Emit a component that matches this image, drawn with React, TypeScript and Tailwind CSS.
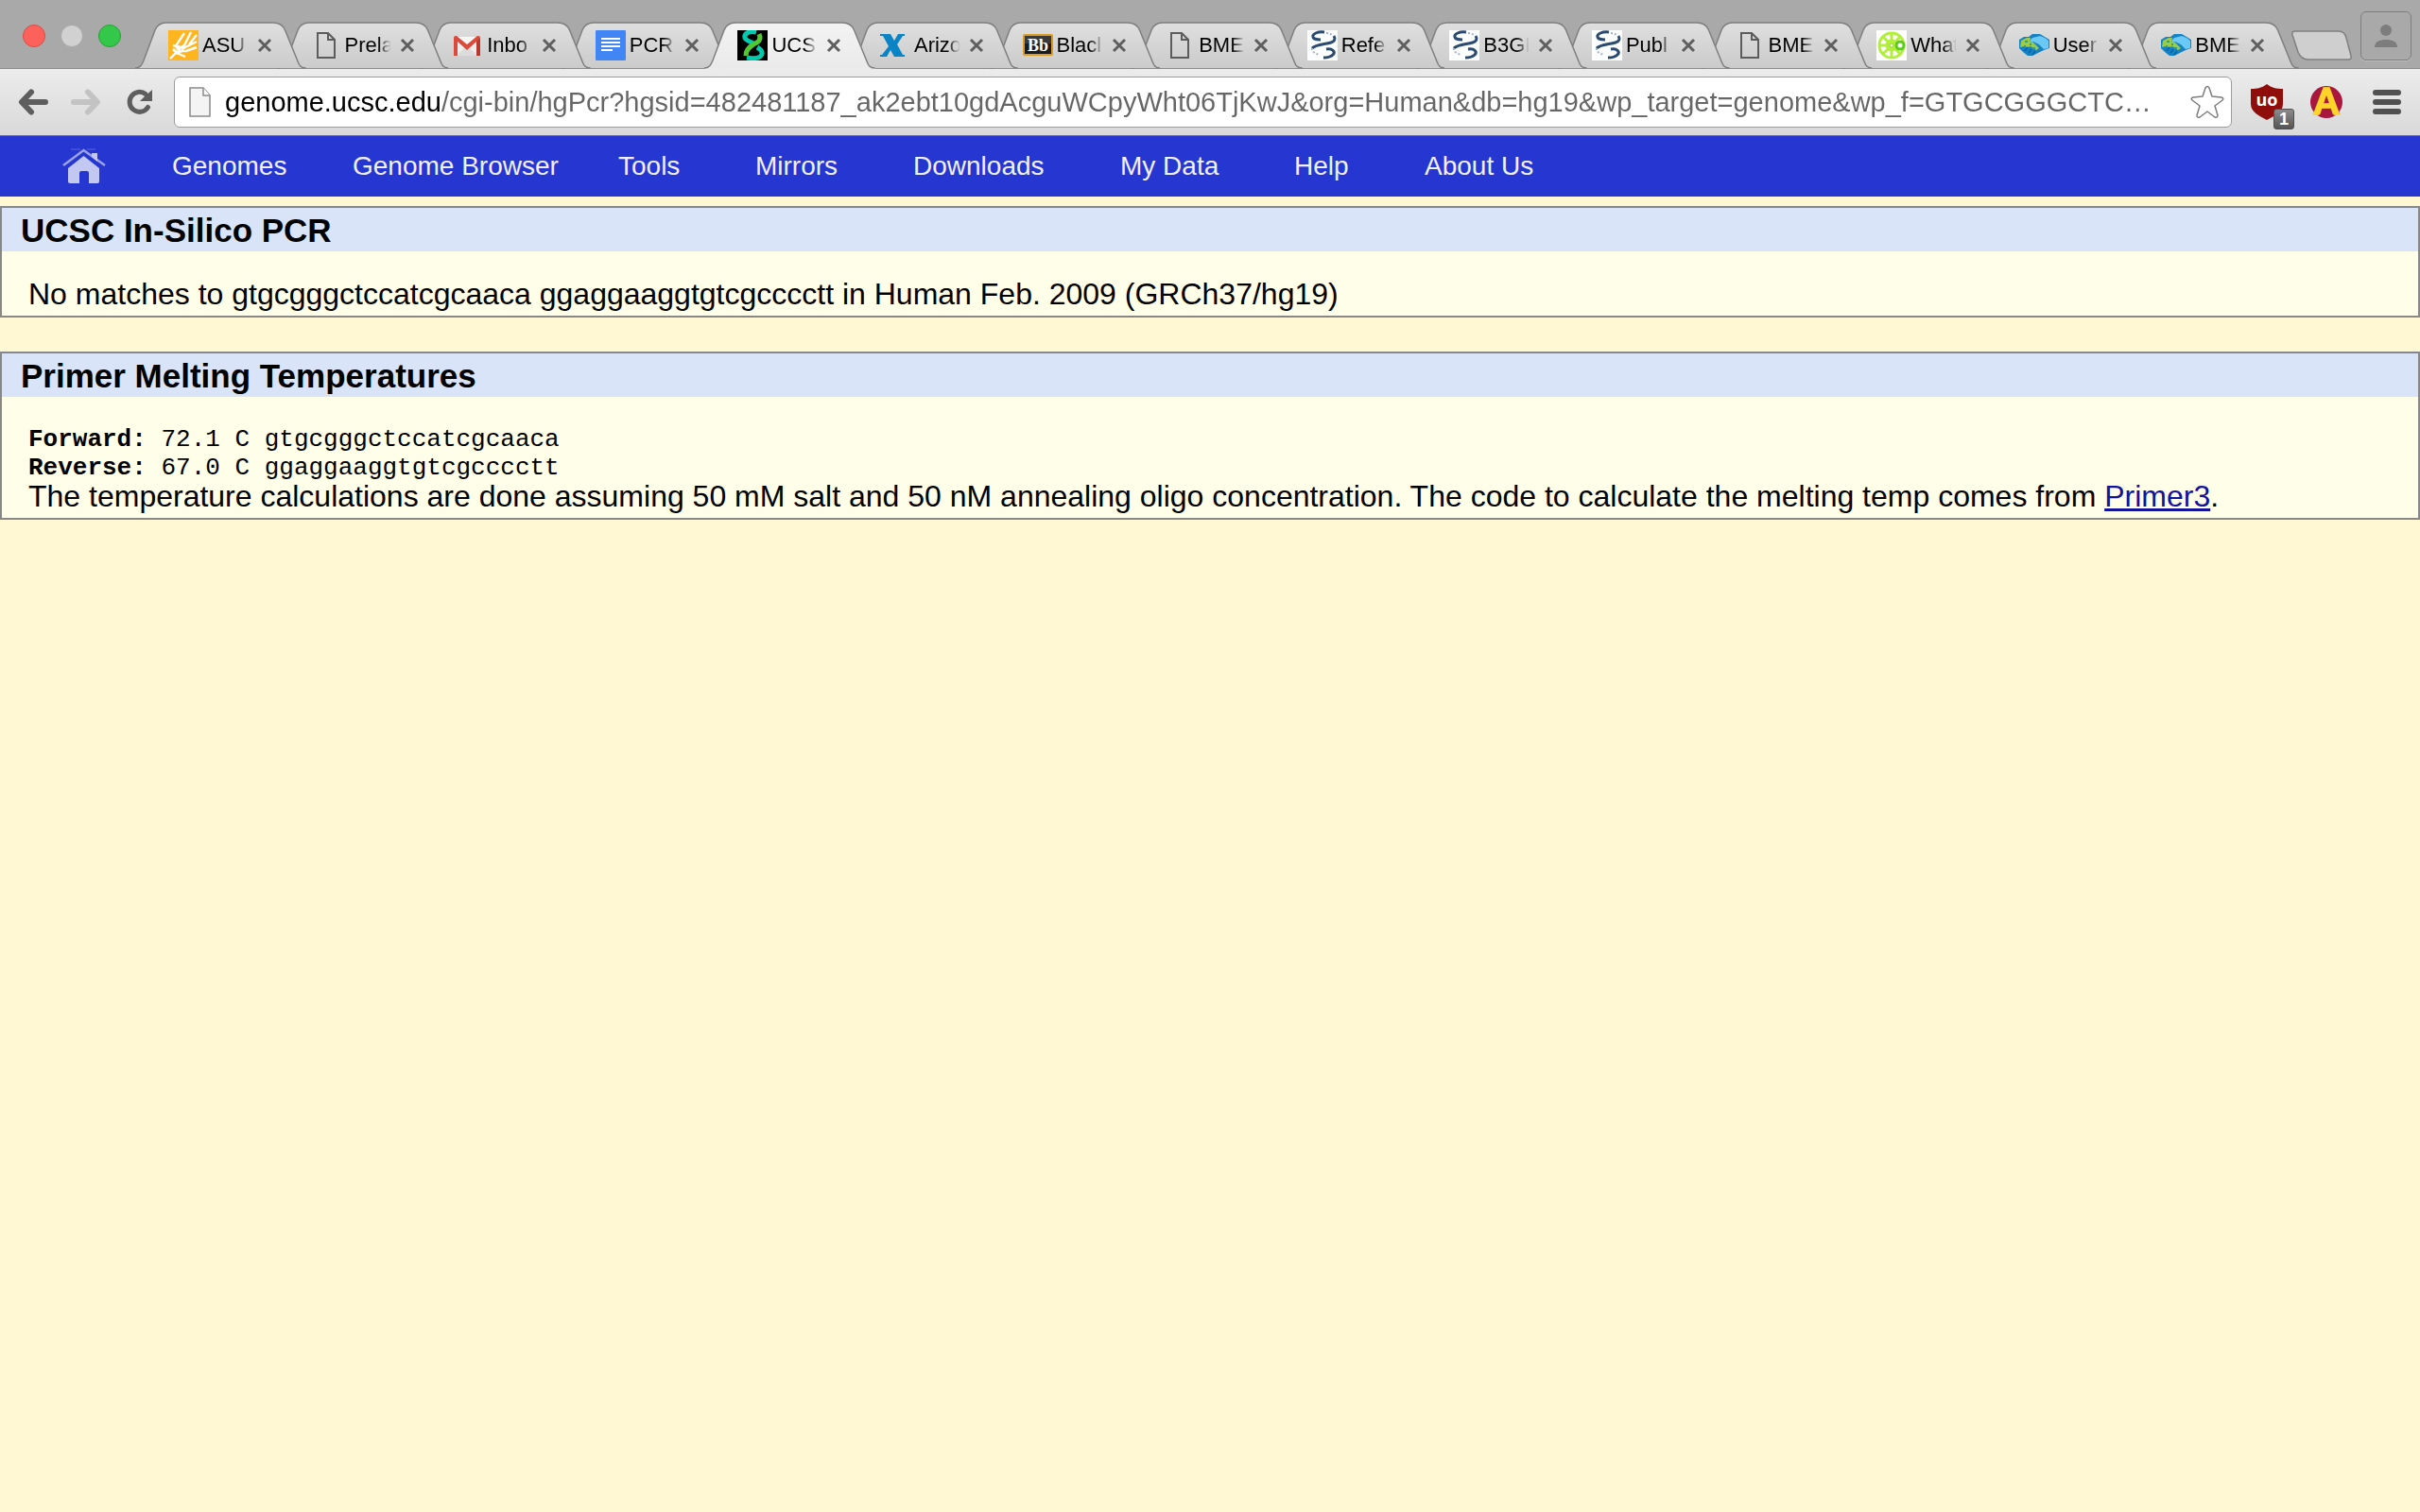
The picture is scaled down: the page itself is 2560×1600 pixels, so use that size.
import type { ReactNode } from 'react';

interface TabInfo {
  title: string;
  icon: ReactNode;
  active?: boolean;
}

interface MenuItem {
  label: string;
  width: string;
}

function PitchforkIcon() {
  return (
    <svg viewBox="0 0 32 32" className="size-8" fill="none" stroke="#fff" strokeWidth="2.4">
      <rect width="32" height="32" fill="#ffb51f" stroke="none" />
      <path d="M2 30 9 23M17 3 9 15q-2 4 3 4l5-3L24 2M13 18l-8-2M22 15l8-10M14 20l4-2 12-6M12 22l7 0 11-4M9 24l9 4" />
      <path d="M9 17 13 24M5 20l6 5" strokeWidth="3" />
    </svg>
  );
}

function PageIcon() {
  return (
    <svg viewBox="0 0 32 32" className="size-8" fill="none" stroke="#5c5c5c" strokeWidth="2">
      <path d="M7 3h11l7 7v19H7z" />
      <path d="M18 3v7h7" />
    </svg>
  );
}

function MailIcon() {
  return (
    <svg viewBox="0 0 32 32" className="size-8">
      <path d="M2 7h26v20H2z" fill="#eee" />
      <path d="M4 27 15 16l11 11z" fill="#dcdcdc" />
      <path d="M4 7h22L15 17z" fill="#f7f7f7" />
      <path d="M1 8q0-2 2-2h1l11 9 11-9h1q2 0 2 2v19h-4V12L15 21 5 12v15H1z" fill="#dc4a3c" />
      <path d="M25 12l4-4v19h-4z" fill="#b9382e" />
    </svg>
  );
}

function DocsIcon() {
  return (
    <svg viewBox="0 0 32 32" className="size-8">
      <rect width="32" height="32" rx="1" fill="#4285f4" />
      <path d="M6 9h20M6 13h20M6 17h20M6 21h12" stroke="#fff" strokeWidth="2" />
    </svg>
  );
}

function HelixIcon() {
  return (
    <svg viewBox="0 0 32 32" className="size-8" fill="none" strokeWidth="5">
      <rect width="32" height="32" fill="#000" />
      <path d="M20 2C12 0 7 4 8 8c1 3 6 4 9 6M21 18c5 3 7 7 3 10-3 2-8 2-14 1" stroke="#00c9ae" />
      <path d="M23 4c3 6-1 9-6 11-5 3-8 6-8 12" stroke="#4fc832" />
    </svg>
  );
}

function CrossIcon() {
  return (
    <svg viewBox="0 0 32 32" className="size-8">
      <path
        d="M0 4h11l4 7 4-7h7v2h-2l-6 9 6 11h2v2H15l-4-7-4 7H0v-2h2l7-9L3 6H0z"
        fill="#0b84c6"
      />
    </svg>
  );
}

function BbIcon() {
  return (
    <svg viewBox="0 0 32 32" className="size-8">
      <rect x="1" y="5" width="30" height="21" rx="1" fill="#1b1b1b" stroke="#d79b26" strokeWidth="2" />
      <rect x="2" y="6" width="28" height="8" fill="#3a3a3a" />
      <text
        x="16"
        y="22"
        textAnchor="middle"
        fontSize="18"
        fontWeight="700"
        fontFamily="Liberation Serif, serif"
        fill="#fff"
      >
        Bb
      </text>
    </svg>
  );
}

function NcbiIcon() {
  return (
    <svg viewBox="0 0 32 32" className="size-8" fill="none" stroke="#2a4a70" strokeWidth="3">
      <rect width="32" height="32" fill="#fcfdfd" stroke="none" />
      <path d="M18 2C11 1 5 4 6 7c0 2 4 3 8 3" />
      <path d="M28 6c2 3 1 6-3 7-7 2-16 2-20 6" />
      <path d="M20 20c7-1 10 3 7 6-2 2-6 3-10 3" />
      <path d="M20 3c3 0 5 1 7 3M5 19c-1 3 3 6 8 7" strokeWidth="2" strokeDasharray="2 2" stroke="#a5b3c8" />
    </svg>
  );
}

function FlowerIcon() {
  return (
    <svg viewBox="0 0 32 32" className="size-8" fill="none" stroke="#b2ee3c" strokeWidth="3">
      <rect width="32" height="32" fill="#fff" stroke="none" />
      <circle cx="16" cy="16" r="13" />
      <circle cx="16" cy="16" r="5" />
      <path d="M16 2v28M2 16h28M6 6l20 20M26 6 6 26" />
      <circle cx="25" cy="16" r="4" stroke="#5bcb1d" fill="#fff" />
      <circle cx="16" cy="16" r="2" fill="#fff" stroke="#8fdc1f" strokeWidth="1" />
    </svg>
  );
}

function HandshakeIcon() {
  return (
    <svg viewBox="0 0 32 32" className="size-8">
      <path d="M0 10 5 7h5l4-3h8l5 3 5 3v9l-6 2-6 3-6 3h-5l-5-4-4-4z" fill="#1482c4" />
      <path d="M18 7l4-1 5 2 4 3v8l-5 1-5-5-6-3-2 1-2-2 3-3z" fill="#6cc9f5" />
      <path d="M2 11l6-3h4l-1 4 4 1 6 6-3 2-6-4-3 1-4-1-4 1z" fill="#9ccb45" />
      <path d="M6 12h3M11 15h2M14 19h3M5 17h2" stroke="#3f9d6c" strokeWidth="2" />
      <path d="M6 22l3-4M10 24l3-4M14 26l3-4" stroke="#0a68ab" strokeWidth="2" />
    </svg>
  );
}

const TABS: TabInfo[] = [
  { title: 'ASU', icon: <PitchforkIcon /> },
  { title: 'Prela', icon: <PageIcon /> },
  { title: 'Inbo', icon: <MailIcon /> },
  { title: 'PCR', icon: <DocsIcon /> },
  { title: 'UCS', icon: <HelixIcon />, active: true },
  { title: 'Arizo', icon: <CrossIcon /> },
  { title: 'Blacl', icon: <BbIcon /> },
  { title: 'BME', icon: <PageIcon /> },
  { title: 'Refe', icon: <NcbiIcon /> },
  { title: 'B3GI', icon: <NcbiIcon /> },
  { title: 'Publ', icon: <NcbiIcon /> },
  { title: 'BME', icon: <PageIcon /> },
  { title: 'What', icon: <FlowerIcon /> },
  { title: 'User', icon: <HandshakeIcon /> },
  { title: 'BME', icon: <HandshakeIcon /> },
];

const MENU: MenuItem[] = [
  { label: 'Genomes', width: 'w-[191px]' },
  { label: 'Genome Browser', width: 'w-[281px]' },
  { label: 'Tools', width: 'w-[145px]' },
  { label: 'Mirrors', width: 'w-[167px]' },
  { label: 'Downloads', width: 'w-[219px]' },
  { label: 'My Data', width: 'w-[184px]' },
  { label: 'Help', width: 'w-[138px]' },
  { label: 'About Us', width: 'w-[160px]' },
];

const PRIMERS = [
  { name: 'Forward:', temp: '72.1 C', sequence: 'gtgcgggctccatcgcaaca' },
  { name: 'Reverse:', temp: '67.0 C', sequence: 'ggaggaaggtgtcgcccctt' },
];

const URL_TEXT =
  'genome.ucsc.edu/cgi-bin/hgPcr?hgsid=482481187_ak2ebt10gdAcguWCpyWht06TjKwJ&org=Human&db=hg19&wp_target=genome&wp_f=GTGCGGGCTC…';

function Tab({ tab, order }: { tab: TabInfo; order: number }) {
  const edge = 'M0 49C6 49 7 45 9 41L21 9C23 4 26 1 33 1H146C153 1 157 4 159 9L172 41C174 46 175 49 181 49';
  return (
    <div
      className="relative flex h-[50px] min-w-0 flex-1 items-center pl-[35px] not-first:-ml-[30px]"
      style={{ zIndex: tab.active ? 30 : order }}
    >
      <svg
        viewBox="0 0 181 50"
        preserveAspectRatio="none"
        className="absolute inset-0 h-full w-full"
        fill="none"
      >
        <path d={tab.active ? `${edge}V50H0z` : `${edge}z`} fill={tab.active ? 'url(#tab-on)' : 'url(#tab-off)'} />
        <path d={edge} stroke="#7f7f7f" strokeWidth="1.5" />
      </svg>
      <div className="relative flex items-center">
        {tab.icon}
        <button
          type="button"
          className="ml-1 w-[54px] text-left text-[22px] leading-8 whitespace-nowrap text-black mask-r-from-65% mask-r-to-90%"
        >
          {tab.title}
        </button>
        <button type="button" aria-label="Close tab" className="ml-1">
          <svg viewBox="0 0 16 16" className="size-4" stroke="#5f5f5f" strokeWidth="3">
            <path d="M2 2l12 12M14 2L2 14" />
          </svg>
        </button>
      </div>
    </div>
  );
}

function TabStrip() {
  return (
    <header className="relative z-10 flex h-[72px] items-end bg-[#a9a9a9] pr-[9px] pl-6">
      <svg className="absolute size-0" aria-hidden="true">
        <defs>
          <linearGradient id="tab-off" x2="0" y2="1">
            <stop stopColor="#dfdfdf" />
            <stop offset="1" stopColor="#cbcbcb" />
          </linearGradient>
          <linearGradient id="tab-on" x2="0" y2="1">
            <stop stopColor="#f3f3f3" />
            <stop offset="1" stopColor="#eaeaea" />
          </linearGradient>
        </defs>
      </svg>

      {/* Window controls */}
      <div className="flex w-[119px] shrink-0 items-center gap-4 pb-[22px]">
        <button
          type="button"
          aria-label="Close window"
          className="size-6 rounded-full border border-[#dd4a45] bg-[#fc615c]"
        />
        <button
          type="button"
          aria-label="Minimize window"
          className="size-6 rounded-full border border-[#a9a9a9] bg-[#d1d1d1]"
        />
        <button
          type="button"
          aria-label="Zoom window"
          className="size-6 rounded-full border border-[#25a034] bg-[#34c84a]"
        />
      </div>

      <nav className="-mb-px flex min-w-0 flex-1">
        {TABS.map((tab, index) => (
          <Tab key={index} tab={tab} order={TABS.length - index} />
        ))}
      </nav>

      <button type="button" aria-label="New tab" className="mb-2 -ml-2 shrink-0">
        <svg viewBox="0 0 64 32" className="h-8 w-16">
          <path
            d="M4 1H50C55 1 57 4 58 8L63 27Q64 31 60 31H18C12 31 9 28 7 23L1 5Q0 1 4 1z"
            fill="#cfcfcf"
            stroke="#808080"
            strokeWidth="1.5"
          />
        </svg>
      </button>
      <button
        type="button"
        aria-label="Profile"
        className="mb-2 ml-[9px] flex h-[52px] w-[54px] shrink-0 items-center justify-center rounded-md border border-[#7d7d7d] shadow-[0_1px_0_#bdbdbd]"
      >
        <svg viewBox="0 0 26 26" className="size-[26px]" fill="#7d7d7d">
          <circle cx="13" cy="7" r="6" />
          <path d="M1 25c0-6 5-8 12-8s12 2 12 8z" />
        </svg>
      </button>
    </header>
  );
}

function Toolbar() {
  return (
    <div className="flex h-[72px] items-center border-t border-b border-t-[#8d8d8d] border-b-[#747474] bg-linear-to-b from-[#ececec] to-[#d9d9d9] pr-5 pl-[19px]">
      <div className="flex w-[165px] shrink-0 items-center">
        <button type="button" aria-label="Back">
          <svg
            viewBox="0 0 34 30"
            className="h-[30px] w-[34px]"
            fill="none"
            stroke="#5e5e5e"
            strokeWidth="6"
            strokeLinecap="round"
            strokeLinejoin="round"
          >
            <path d="M29 15H5M14 4.500L4 15l10 10.500" />
          </svg>
        </button>
        <button type="button" aria-label="Forward" className="ml-5">
          <svg
            viewBox="0 0 34 30"
            className="h-[30px] w-[34px]"
            fill="none"
            stroke="#c3c3c3"
            strokeWidth="6"
            strokeLinecap="round"
            strokeLinejoin="round"
          >
            <path d="M5 15h24M20 4.500L30 15 20 25.500" />
          </svg>
        </button>
        <button type="button" aria-label="Reload" className="ml-[26px]">
          <svg viewBox="0 0 30 30" className="size-[30px]" fill="none" stroke="#5e5e5e" strokeWidth="5">
            <path d="M23.500 20.500A10.500 10.500 0 1 1 21 6.500" strokeLinecap="round" />
            <path d="M28 2v12H15l5-5z" fill="#5e5e5e" stroke="none" />
          </svg>
        </button>
      </div>

      <div className="flex h-[54px] min-w-0 flex-1 items-center rounded-md border border-[#9c9c9c] bg-white pr-[7px] pl-[15px]">
        <svg viewBox="0 0 24 32" className="h-8 w-6 shrink-0" fill="#f4f4f4" stroke="#8b8b8b" strokeWidth="1.5">
          <path d="M1 1h14l7 8v22H1z" />
          <path d="M15 1v8h7" fill="#fff" />
        </svg>
        <input
          type="text"
          aria-label="Address"
          defaultValue={URL_TEXT}
          className="ml-[14px] min-w-0 flex-1 bg-linear-to-r from-black from-[229px] to-[#666] to-[229px] bg-clip-text text-[29px] leading-10 text-transparent outline-none"
        />
        <button type="button" aria-label="Bookmark" className="shrink-0">
          <svg viewBox="0 0 36 36" className="size-9" fill="none" stroke="#7d7d7d" strokeWidth="1.500">
            <path
              strokeLinejoin="round"
              d="M16 3Q18 0 20 3L23 12 33 13Q36 14 34 16L26 22 29 32Q29 35 26 34L18 28 10 34Q7 35 7 32L10 22 2 16Q0 14 3 13L13 12z"
            />
          </svg>
        </button>
      </div>

      {/* Extensions */}
      <button type="button" aria-label="uBlock" className="relative ml-5 h-[38px] w-[34px] shrink-0">
        <svg viewBox="0 0 34 38" className="h-[38px] w-[34px]">
          <path d="M17 0c5 4 10 5 17 5v16c0 9-10 13-17 17C10 34 0 30 0 21V5c7 0 12-1 17-5z" fill="#8f0e0c" />
          <text
            x="17"
            y="23"
            textAnchor="middle"
            fontSize="18"
            fontWeight="700"
            fontFamily="Open Sans, sans-serif"
            fill="#fff"
          >
            uo
          </text>
        </svg>
        <span className="absolute top-[26px] left-6 flex h-[22px] w-[22px] items-center justify-center rounded-[3px] border border-[#4e4e4e] bg-linear-to-b from-[#8c8c8c] to-[#555] text-[18px] leading-none font-bold text-white">
          1
        </span>
      </button>
      <button type="button" aria-label="Extension" className="ml-[29px] shrink-0">
        <svg viewBox="0 0 34 34" className="size-[34px]">
          <circle cx="17" cy="17" r="17" fill="#a9173f" />
          <text
            x="18"
            y="30"
            textAnchor="middle"
            fontSize="37"
            fontWeight="900"
            fontFamily="Lato, sans-serif"
            fill="#5c0d22"
          >
            A
          </text>
          <text
            x="17"
            y="30"
            textAnchor="middle"
            fontSize="37"
            fontWeight="900"
            fontFamily="Lato, sans-serif"
            fill="#ffd42a"
            stroke="#ffd42a"
            strokeWidth="1.5"
          >
            A
          </text>
        </svg>
      </button>
      <button type="button" aria-label="Menu" className="ml-8 shrink-0">
        <svg viewBox="0 0 30 28" className="h-7 w-[30px]" stroke="#505050" strokeWidth="6" strokeLinecap="round">
          <path d="M3 4h24M3 14h24M3 24h24" />
        </svg>
      </button>
    </div>
  );
}

function SiteNav() {
  return (
    <nav className="flex h-16 items-center bg-[#2636d1] pl-[66px] text-[28px] leading-8 text-[#f0f0fb]">
      <a href="#" aria-label="Home" className="w-[116px]">
        <svg viewBox="0 0 46 38" className="h-[38px] w-[46px]" fill="#c3c8f3">
          <path d="M6 21 22.500 8 39 21v14q0 2-2 2h-9V26q0-2-2-2h-6q-2 0-2 2v11H8q-2 0-2-2z" />
          <path d="M1 18 22.500 2 45 18" fill="none" stroke="#9aa2e8" strokeWidth="2.500" />
          <path d="M31 5h6v9l-6-5z" />
          <path d="M9 1h10M26 1h9" stroke="#5b67dc" strokeWidth="1" />
        </svg>
      </a>
      {MENU.map((item) => (
        <a key={item.label} href="#" className={`${item.width} shrink-0 whitespace-nowrap`}>
          {item.label}
        </a>
      ))}
    </nav>
  );
}

function Section({ title, children }: { title: string; children: ReactNode }) {
  return (
    <section className="border-2 border-[#888] bg-[#fffee8]">
      <h2 className="bg-[#d9e4f8] pt-0.5 pl-5 text-[35px] leading-[44px] font-bold">{title}</h2>
      <div className="px-7 pt-[30px] pb-2 text-[32px] leading-[30px]">{children}</div>
    </section>
  );
}

export default function App() {
  return (
    <div className="min-h-screen bg-[#fff8d2] font-['Liberation_Sans',Arial,sans-serif] text-black">
      <TabStrip />
      <Toolbar />
      <SiteNav />
      <main className="flex flex-col gap-9 pt-[10px]">
        <Section title="UCSC In-Silico PCR">
          <p>No matches to gtgcgggctccatcgcaaca ggaggaaggtgtcgcccctt in Human Feb. 2009 (GRCh37/hg19)</p>
        </Section>
        <Section title="Primer Melting Temperatures">
          <pre className="font-['Liberation_Mono',monospace] text-[26px] leading-[30px]">
            {PRIMERS.map((primer) => (
              <div key={primer.name}>
                <b>{primer.name}</b> {primer.temp} {primer.sequence}
              </div>
            ))}
          </pre>
          <p>
            The temperature calculations are done assuming 50 mM salt and 50 nM annealing oligo
            concentration. The code to calculate the melting temp comes from{' '}
            <a href="#" className="text-[#12129c] underline">
              Primer3
            </a>
            .
          </p>
        </Section>
      </main>
    </div>
  );
}
